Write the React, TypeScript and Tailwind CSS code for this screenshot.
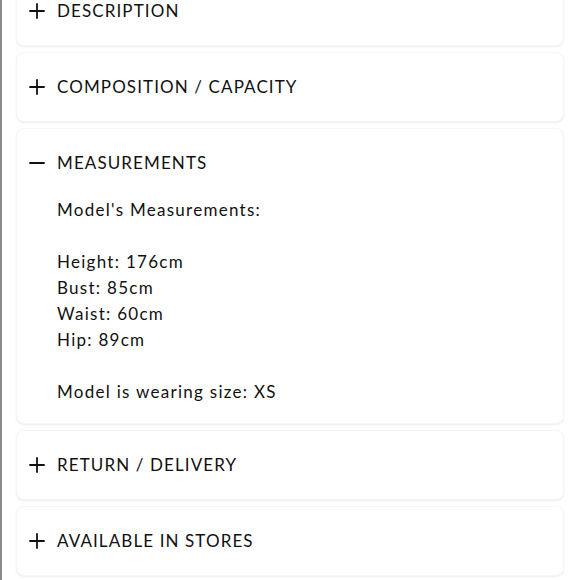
import { Minus, Plus } from 'lucide-react'

const sections = [
  { title: 'DESCRIPTION', open: false },
  { title: 'COMPOSITION / CAPACITY', open: false },
  { title: 'MEASUREMENTS', open: true },
  { title: 'RETURN / DELIVERY', open: false },
  { title: 'AVAILABLE IN STORES', open: false },
]

const body = [
  "Model's Measurements:",
  '',
  'Height: 176cm',
  'Bust: 85cm',
  'Waist: 60cm',
  'Hip: 89cm',
  '',
  'Model is wearing size: XS',
]

export default function App() {
  return (
    <div
      className="flex h-[580px] w-[580px] overflow-hidden bg-white text-[#111]"
      style={{ fontFamily: 'Lato, "Open Sans", sans-serif' }}
    >
      <div className="w-[2px] shrink-0 bg-[#8a8a8a]" />
      <div className="-mt-6 flex flex-1 flex-col gap-[6px] pl-[14px] pr-4">
        {sections.map((s) => (
          <div
            key={s.title}
            className="rounded-lg border border-[#f5f5f5] bg-white shadow-[0_1px_2px_rgba(0,0,0,0.07)]"
          >
            <div className="flex h-[68px] items-center gap-2 pl-2">
              {s.open ? (
                <Minus className="h-6 w-6" strokeWidth={1.8} />
              ) : (
                <Plus className="h-6 w-6" strokeWidth={1.8} />
              )}
              <span className="text-[17px] tracking-[0.065em]">{s.title}</span>
            </div>
            {s.open && (
              <div className="pb-[18px] pl-[40px] text-[17px] leading-[26px] tracking-[0.075em]">
                {body.map((line, i) => (
                  <div key={i} className="h-[26px]">
                    {line}
                  </div>
                ))}
              </div>
            )}
          </div>
        ))}
      </div>
    </div>
  )
}
